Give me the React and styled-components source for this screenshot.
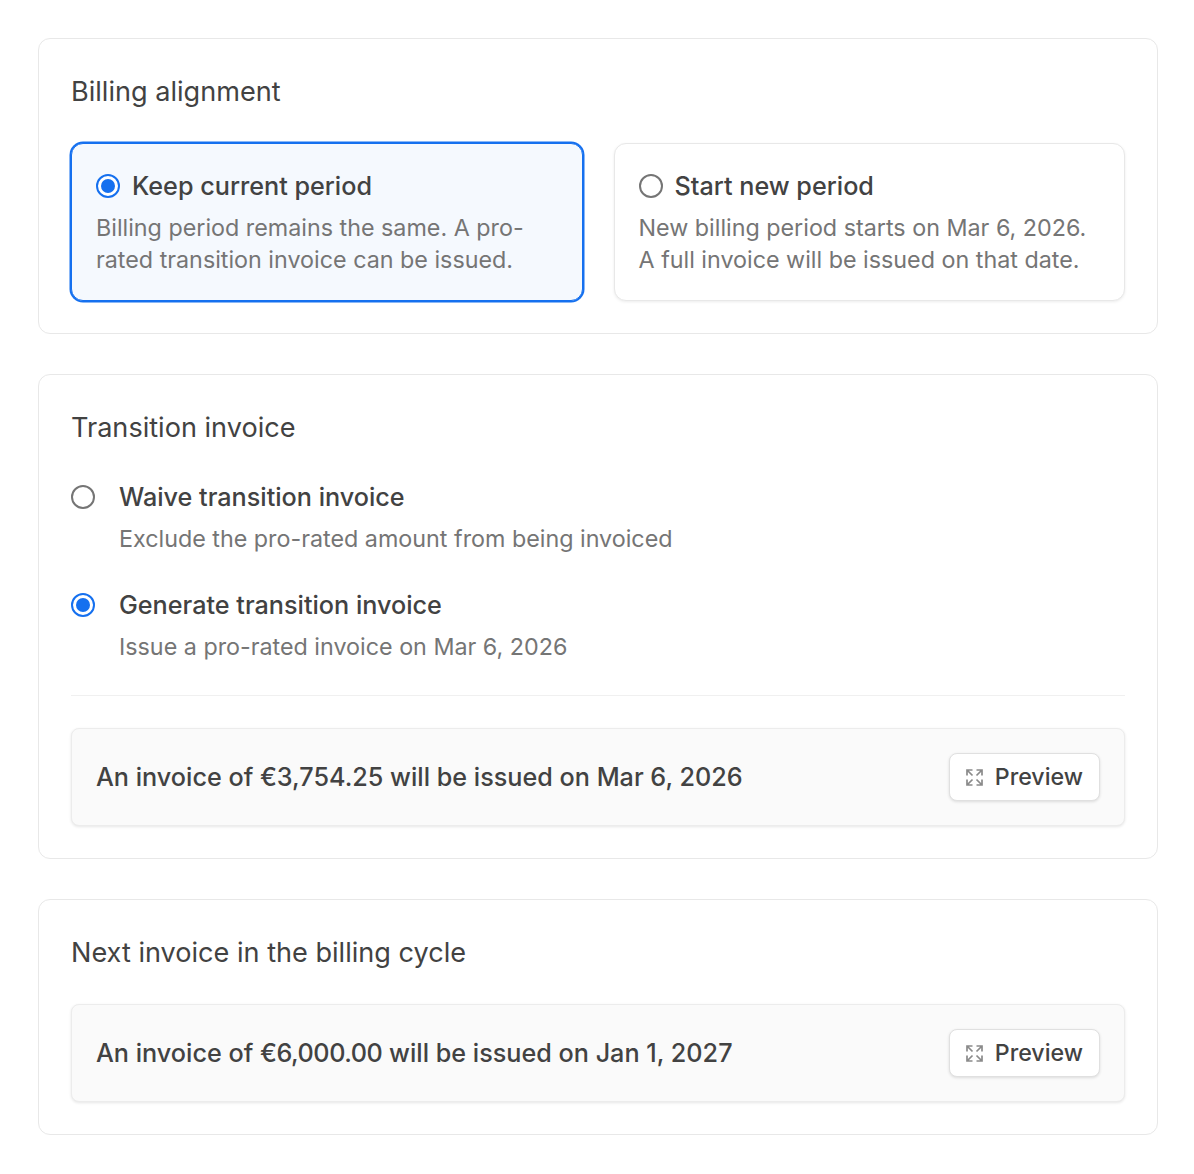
import React from "react";
import styled, { createGlobalStyle } from "styled-components";

const Global = createGlobalStyle`
  * { box-sizing: border-box; }
  html, body { margin: 0; background: #fff; }
  body { font-family: Inter, "Liberation Sans", sans-serif; color: #424242; }
`;
const Page = styled.div`
  display: flex; flex-direction: column; gap: 40px;
  padding: 38px 36px 38px 38px;
`;
const Card = styled.section`
  border: 1px solid #e8e8e8; border-radius: 12px; background: #fff;
  padding: 32px;
  display: flex; flex-direction: column;
`;
const Title = styled.h2`
  margin: 0; font-size: 27.1px; line-height: 42px; height: 40px; font-weight: 400; color: #424242;
`;
const OptionGrid = styled.div`
  display: grid; grid-template-columns: 1fr 1fr; gap: 31px; margin-top: 32px;
`;
const OptionCard = styled.div`
  height: 158px; border-radius: 12px; padding: 24px;
  display: flex; flex-direction: column;
  background: ${p => p.$selected ? "#f5f9fe" : "#fff"};
  border: 1px solid ${p => p.$selected ? "#1570ef" : "#e8e8e8"};
  box-shadow: ${p => p.$selected ? "0 0 0 1.5px #1570ef" : "0 1px 3px rgba(0,0,0,.08)"};
`;
const OptionHead = styled.div`
  display: flex; align-items: center; gap: 12px; height: 36px; flex: none;
  font-size: 25.2px; font-weight: 450; color: #424242;
`;
const Desc = styled.div`
  font-size: 23.3px; line-height: 32px; color: #757575; margin-top: 8px;
`;
const RadioOuter = styled.span`
  flex: none; width: 24px; height: 24px; border-radius: 50%;
  border: 2px solid ${p => p.$on ? "#1570ef" : "#757575"};
  display: flex; align-items: center; justify-content: center; background: #fff;
`;
const RadioDot = styled.span`
  width: 14px; height: 14px; border-radius: 50%; background: #1570ef;
`;
const RadioList = styled.div`
  display: flex; flex-direction: column; gap: 28px; margin-top: 31px;
`;
const RadioItem = styled.div`
  display: grid; grid-template-columns: 24px 1fr; column-gap: 24px; align-items: center;
`;
const RadioLabel = styled.div`
  font-size: 25.2px; line-height: 38px; font-weight: 450; color: #424242;
`;
const Sub = styled(Desc)`
  grid-column: 2; line-height: 38px; margin-top: 4px;
`;
const Divider = styled.hr`
  border: 0; border-top: 1px solid #f0f0f0; margin: 29px 0 32px; width: 100%;
`;
const Notice = styled.div`
  display: flex; align-items: center; justify-content: space-between;
  height: 98px; padding: 0 24px; border-radius: 8px;
  background: #fafafa; border: 1px solid #ececec;
  box-shadow: 0 1px 3px rgba(0,0,0,.1);
  font-size: 25.2px; font-weight: 450; color: #424242;
`;
const Amount = styled.span`
  letter-spacing: ${p => p.$tight ? "-0.45px" : "0"};
`;
const NoticeWrap = styled.div`
  margin-top: 32px;
`;
const Button = styled.button`
  display: flex; align-items: center; gap: 12px;
  height: 48px; padding: 0 16px; border-radius: 8px;
  background: #fff; border: 1px solid #e0e0e0;
  box-shadow: 0 1px 3px rgba(0,0,0,.12);
  font: 450 23.2px Inter, sans-serif; color: #424242;
`;
const Expand = () => (
  <svg width="17" height="17" viewBox="0 0 17 17" fill="none" stroke="#8a8a8a" strokeWidth="1.7">
    <path d="M1 6.5V1h5.5M1 1l5.5 5.5M16 6.5V1h-5.5M16 1l-5.5 5.5M1 10.5V16h5.5M1 16l5.5-5.5M16 10.5V16h-5.5M16 16l-5.5-5.5" />
  </svg>
);
const Radio = ({ on }) => <RadioOuter $on={on}>{on && <RadioDot />}</RadioOuter>;
const Preview = () => <Button><Expand />Preview</Button>;

export default function App() {
  return (
    <>
      <Global />
      <Page>
        <Card>
          <Title>Billing alignment</Title>
          <OptionGrid>
            <OptionCard $selected>
              <OptionHead><Radio on />Keep current period</OptionHead>
              <Desc>Billing period remains the same. A pro-rated transition invoice can be issued.</Desc>
            </OptionCard>
            <OptionCard>
              <OptionHead><Radio />Start new period</OptionHead>
              <Desc>New billing period starts on Mar 6, 2026. A full invoice will be issued on that date.</Desc>
            </OptionCard>
          </OptionGrid>
        </Card>
        <Card>
          <Title>Transition invoice</Title>
          <RadioList>
            <RadioItem>
              <Radio /><RadioLabel>Waive transition invoice</RadioLabel>
              <Sub>Exclude the pro-rated amount from being invoiced</Sub>
            </RadioItem>
            <RadioItem>
              <Radio on /><RadioLabel>Generate transition invoice</RadioLabel>
              <Sub>Issue a pro-rated invoice on Mar 6, 2026</Sub>
            </RadioItem>
          </RadioList>
          <Divider />
          <Notice><span>An invoice of <Amount>€3,754.25</Amount> will be issued on Mar 6, 2026</span><Preview /></Notice>
        </Card>
        <Card>
          <Title>Next invoice in the billing cycle</Title>
          <NoticeWrap>
            <Notice><span>An invoice of <Amount $tight>€6,000.00</Amount> will be issued on Jan 1, 2027</span><Preview /></Notice>
          </NoticeWrap>
        </Card>
      </Page>
    </>
  );
}
